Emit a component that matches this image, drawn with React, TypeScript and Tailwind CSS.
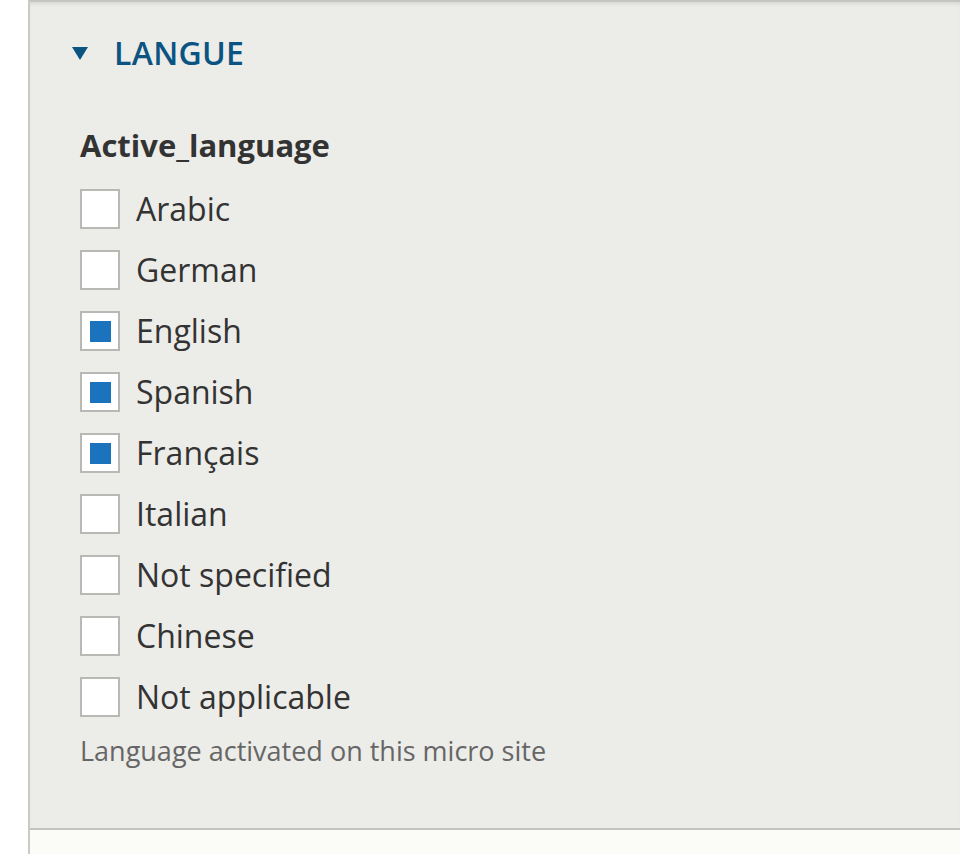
const languages = [
  { name: 'Arabic', checked: false },
  { name: 'German', checked: false },
  { name: 'English', checked: true },
  { name: 'Spanish', checked: true },
  { name: 'Français', checked: true },
  { name: 'Italian', checked: false },
  { name: 'Not specified', checked: false },
  { name: 'Chinese', checked: false },
  { name: 'Not applicable', checked: false },
];

const Checkbox = ({ checked }: { checked: boolean }) => (
  <span className="flex h-[40px] w-[40px] shrink-0 items-center justify-center border-2 border-[#b8b8b5] bg-white">
    {checked && <span className="block h-[21px] w-[21px] bg-[#1b72bd]"></span>}
  </span>
);

export default function App() {
  return (
    <div
      className="h-[854px] w-[960px] overflow-hidden bg-white pl-[28px]"
      style={{ fontFamily: '"Open Sans", "Liberation Sans", sans-serif' }}
    >
      <div className="flex h-full flex-col border-l-2 border-[#c9c9c6]">
        {/* details panel */}
        <div className="h-[830px] border-t-2 border-b-2 border-[#c4c4c1] bg-[#ecece8] shadow-[inset_0_4px_5px_-3px_rgba(0,0,0,0.12)]">
          <div className="flex items-center pl-[42px] pt-[31px]">
            <svg width="16" height="13" viewBox="0 0 16 13" className="mr-[26px]">
              <path d="M0 0 H16 L8 13 Z" fill="#0a5382" />
            </svg>
            <span className="text-[32px] font-semibold leading-[40px] tracking-[0.3px] text-[#0a5382]">LANGUE</span>
          </div>

          <div className="pl-[50px] pt-[52px]">
            <div className="text-[31px] font-bold leading-[40px] text-[#333]">Active_language</div>
            <div className="mt-[24px] flex flex-col gap-[21px]">
              {languages.map((lang) => (
                <label key={lang.name} className="flex items-center gap-[16px]">
                  <Checkbox checked={lang.checked} />
                  <span className="text-[32px] leading-[40px] text-[#333]">{lang.name}</span>
                </label>
              ))}
            </div>
            <p className="mt-[18px] text-[27px] leading-[32px] text-[#666]">Language activated on this micro site</p>
          </div>
        </div>
        <div className="flex-1 bg-[#fbfbf8]"></div>
      </div>
    </div>
  );
}
